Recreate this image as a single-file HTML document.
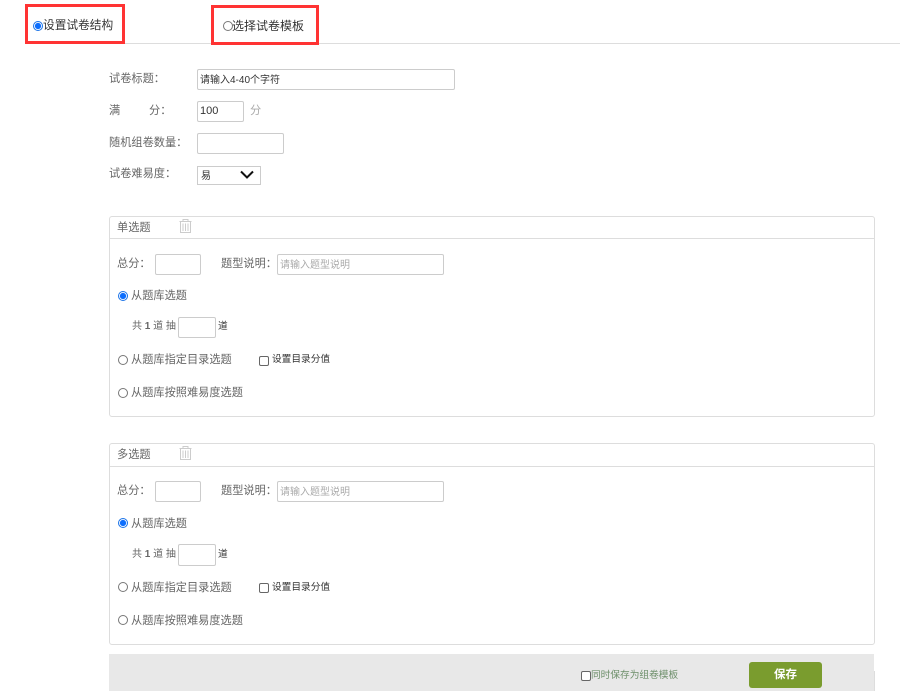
<!DOCTYPE html>
<html><head><meta charset="utf-8"><style>
html,body{margin:0;padding:0;background:#fff}
body{width:900px;height:691px;position:relative;overflow:hidden;font-family:"Liberation Sans","Noto Sans CJK SC",sans-serif;font-size:11.2px;color:#666}
.a,.t,.i,.r,.c{position:absolute;box-sizing:border-box}
.t{white-space:nowrap;line-height:16px;height:16px}
.i{background:#fff;border:1px solid #ccc;border-radius:2px}
.p{position:absolute;box-sizing:border-box;left:109px;width:766px;border:1px solid #ddd;border-radius:3px;background:#fff}
.r{width:10px;height:10px;border:1px solid #777;border-radius:50%;background:#fff}
.r.on{border:1px solid #1a73e8;background:radial-gradient(circle,#0d6efd 0,#0d6efd 2.800px,#fff 3.400px)}
.c{width:10px;height:10px;border:1px solid #666;border-radius:2px;background:#fff}
.red{border:3px solid #f33}
.ph{color:#aaa;font-size:10px}
.d{color:#333;font-size:9.7px}
</style></head><body>
<div class="a" style="left:25px;top:43px;width:875px;height:1px;background:#ddd"></div>
<div class="a red" style="left:25px;top:4px;width:100px;height:40px"></div>
<div class="a red" style="left:211px;top:5px;width:108px;height:40px"></div>
<div class="r on" style="left:33px;top:21px"></div>
<div class="t" style="left:43px;top:18px;font-size:11.700px;color:#333">设置试卷结构</div>
<div class="r" style="left:223px;top:21px"></div>
<div class="t" style="left:232px;top:18px;font-size:12px;color:#333">选择试卷模板</div>

<div class="t" style="left:109px;top:71px">试卷标题：</div>
<div class="i" style="left:197px;top:69px;width:258px;height:21px"></div>
<div class="t" style="left:200px;top:73px;color:#333;font-size:10px">请输入4-40个字符</div>
<div class="t" style="left:109px;top:103px">满</div>
<div class="t" style="left:149px;top:103px">分：</div>
<div class="i" style="left:197px;top:101px;width:47px;height:21px"></div>
<div class="t" style="left:200px;top:103px;color:#333;font-size:11px">100</div>
<div class="t" style="left:250px;top:103px;color:#aaa">分</div>
<div class="t" style="left:109px;top:135px">随机组卷数量：</div>
<div class="i" style="left:197px;top:133px;width:87px;height:21px"></div>
<div class="t" style="left:109px;top:166px">试卷难易度：</div>
<div class="i" style="left:197px;top:166px;width:64px;height:19px;border-radius:0"></div>
<div class="t" style="left:201px;top:169px;color:#333;font-size:10px">易</div>
<svg class="a" style="left:240px;top:170px" width="14" height="10" viewBox="0 0 14 10"><path d="M1 1.500 7 7.500 13 1.500" fill="none" stroke="#111" stroke-width="2"/></svg>

<div class="p" style="top:216px;height:201px"></div>
<div class="a" style="left:110px;top:238px;width:764px;height:1px;background:#ddd"></div>
<div class="t" style="left:117px;top:220px">单选题</div>
<svg class="a" style="left:179px;top:219px" width="13" height="14" viewBox="0 0 13 14" fill="none" stroke="#ccc"><path d="M.5 2.500h12M4 2.500V.5h5v2M1.500 2.500v11h10v-11M4 4.500v7.500M6.500 4.500v7.500M9 4.500v7.500"/></svg>
<div class="t" style="left:117px;top:256px">总分：</div>
<div class="i" style="left:155px;top:254px;width:46px;height:21px"></div>
<div class="t" style="left:221px;top:256px">题型说明：</div>
<div class="i" style="left:277px;top:254px;width:167px;height:21px"></div>
<div class="t ph" style="left:280px;top:258px">请输入题型说明</div>
<div class="r on" style="left:118px;top:291px"></div>
<div class="t" style="left:131px;top:288px">从题库选题</div>
<div class="t" style="left:132px;top:319px;font-size:10px">共 <b>1</b> 道 抽</div>
<div class="i" style="left:178px;top:317px;width:38px;height:21px"></div>
<div class="t d" style="left:218px;top:319px">道</div>
<div class="r" style="left:118px;top:355px"></div>
<div class="t" style="left:131px;top:352px">从题库指定目录选题</div>
<div class="c" style="left:259px;top:356px"></div>
<div class="t d" style="left:272px;top:352px">设置目录分值</div>
<div class="r" style="left:118px;top:388px"></div>
<div class="t" style="left:131px;top:385px">从题库按照难易度选题</div>

<div class="p" style="top:443px;height:202px"></div>
<div class="a" style="left:110px;top:466px;width:764px;height:1px;background:#ddd"></div>
<div class="t" style="left:117px;top:447px">多选题</div>
<svg class="a" style="left:179px;top:446px" width="13" height="14" viewBox="0 0 13 14" fill="none" stroke="#ccc"><path d="M.5 2.500h12M4 2.500V.5h5v2M1.500 2.500v11h10v-11M4 4.500v7.500M6.500 4.500v7.500M9 4.500v7.500"/></svg>
<div class="t" style="left:117px;top:483px">总分：</div>
<div class="i" style="left:155px;top:481px;width:46px;height:21px"></div>
<div class="t" style="left:221px;top:483px">题型说明：</div>
<div class="i" style="left:277px;top:481px;width:167px;height:21px"></div>
<div class="t ph" style="left:280px;top:485px">请输入题型说明</div>
<div class="r on" style="left:118px;top:518px"></div>
<div class="t" style="left:131px;top:516px">从题库选题</div>
<div class="t" style="left:132px;top:547px;font-size:10px">共 <b>1</b> 道 抽</div>
<div class="i" style="left:178px;top:544px;width:38px;height:22px"></div>
<div class="t d" style="left:218px;top:547px">道</div>
<div class="r" style="left:118px;top:582px"></div>
<div class="t" style="left:131px;top:580px">从题库指定目录选题</div>
<div class="c" style="left:259px;top:583px"></div>
<div class="t d" style="left:272px;top:580px">设置目录分值</div>
<div class="r" style="left:118px;top:615px"></div>
<div class="t" style="left:131px;top:613px">从题库按照难易度选题</div>

<div class="a" style="left:109px;top:654px;width:765px;height:37px;background:#e8e8e8"></div>
<div class="a" style="left:874px;top:671px;width:1px;height:20px;background:#ddd"></div>
<div class="c" style="left:581px;top:671px"></div>
<div class="t" style="left:591px;top:668px;color:#6d8f6a;font-size:9.700px">同时保存为组卷模板</div>
<div class="a" style="left:749px;top:662px;width:73px;height:26px;background:#7a9c2e;border-radius:3px;color:#fff;font-size:11.500px;font-weight:bold;text-align:center;line-height:26px">保存</div>
</body></html>
